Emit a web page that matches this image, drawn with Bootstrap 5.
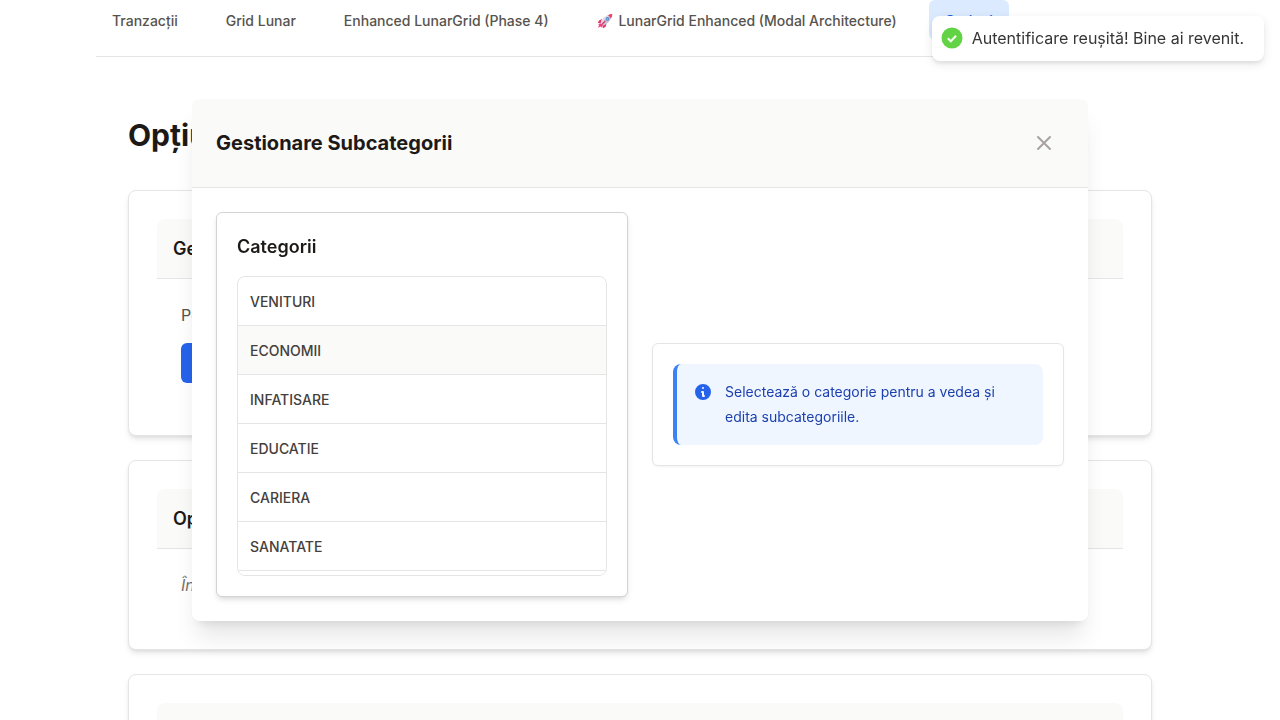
<!DOCTYPE html>
<html lang="ro">
<head>
<meta charset="utf-8">
<meta name="viewport" content="width=device-width, initial-scale=1">
<title>Opțiuni</title>
<link href="https://cdn.jsdelivr.net/npm/bootstrap@5.3.0/dist/css/bootstrap.min.css" rel="stylesheet">
<style>
  :root {
    --line: #e5e5e5;
    --soft: #fafaf9;
    --ink: #1c1917;
    --text: #57534e;
    --shadow-md: 0 4px 6px -1px rgba(0,0,0,.1), 0 2px 4px -2px rgba(0,0,0,.1);
  }
  body { font-family: Inter, "Liberation Sans", sans-serif; color: var(--ink); background: #fff; }
  h1, h2, h3, p { margin: 0; }
  .page { max-width: 1152px; padding: 0 32px; }
  .tabs { border-bottom: 1px solid var(--line); padding-bottom: 16px; margin-bottom: 24px; }
  .tabs .nav-link { color: var(--text); font-size: 14px; line-height: 20px; padding-top: 11px; padding-bottom: 9px; font-weight: 500; border-radius: 6px; white-space: nowrap; }
  .tabs .nav-link.active { background: #dbeafe; color: #2563eb; }
  .rocket { vertical-align: -3px; }
  .page-title { font-size: 30px; line-height: 45px; font-weight: 700; margin-bottom: 32px; }
  .panel { border: 1px solid var(--line); border-radius: 8px; padding: 28px; box-shadow: var(--shadow-md); background: #fff; }
  .panel-head { background: var(--soft); border-bottom: 1px solid var(--line); border-radius: 8px 8px 0 0; }
  .panel-head h2, .pane h3 { font-size: 18px; line-height: 27px; font-weight: 600; }
  .panel p { color: var(--text); }
  .panel p.fst-italic { color: #78716c; }
  .btn-main { background: #2563eb; color: #fff; border-radius: 6px; font-size: 14px; font-weight: 500; height: 40px; border: 0; }
  .modal { --bs-modal-width: 896px; }
  .modal-content { border: 0; border-radius: 8px; color: var(--ink); box-shadow: 0 20px 25px -5px rgba(0,0,0,.1), 0 8px 10px -6px rgba(0,0,0,.1); }
  .modal-header { background: var(--soft); border-bottom: 1px solid var(--line); border-radius: 8px 8px 0 0; padding: 24px; }
  .modal-title { font-size: 20px; line-height: 30px; font-weight: 700; }
  .close-x { width: 40px; height: 40px; color: #a8a29e; }
  .pane { border: 1px solid var(--line); border-radius: 6px; padding: 20px; box-shadow: 0 1px 2px rgba(0,0,0,.05); background: #fff; }
  .pane-strong { border-color: #d6d3d1; box-shadow: var(--shadow-md); }
  .cat-list { border: 1px solid var(--line); border-radius: 8px; max-height: 300px; overflow-y: auto; scrollbar-width: none; }
  .cat-list::-webkit-scrollbar { display: none; }
  .cat-list .list-group-item { flex-shrink: 0; padding: 13px 12px 11px; font-size: 14px; line-height: 24px; font-weight: 500; color: #44403c; border-color: var(--line); border-width: 0 0 1px; }
  .cat-list .list-group-item.hovered { background: var(--soft); }
  .note { background: #eff6ff; color: #1e40af; border-left: 4px solid #3b82f6; border-radius: 8px; padding: 15px 16px 16px; font-size: 14px; line-height: 25px; gap: 12px; }
  .note svg { color: #2563eb; margin-top: 3px; }
  .notice { top: 16px; right: 16px; z-index: 1100; background: #fff; color: #363636; border-radius: 8px; padding: 12px 20px 12px 10px; gap: 10px; line-height: 21px; box-shadow: 0 3px 10px rgba(0,0,0,.1), 0 3px 3px rgba(0,0,0,.05); }
</style>
</head>
<body class="overflow-hidden">
<div class="page mx-auto">
  <nav class="nav tabs flex-nowrap gap-3" aria-label="Principal">
    <a class="nav-link" href="#">Tranzacții</a>
    <a class="nav-link" href="#">Grid Lunar</a>
    <a class="nav-link" href="#">Enhanced LunarGrid (Phase 4)</a>
    <a class="nav-link" href="#"><svg class="rocket" width="18" height="16" viewBox="0 0 18 16" aria-hidden="true">
      <path d="M5 6L2 7.500.8 10l3 .2zM9.500 10.500L8.500 14l-2.700 1.300L5.600 12z" fill="#e8316f"/>
      <path d="M3.600 10L1.200 11.600l1 .5-1.400 2.700 2.800-1.200.8 1 1.700-2.300z" fill="#f0437f"/>
      <path d="M3.500 10.500Q5.500 3.500 13.500 1.300L15 2.800Q13 10 6 12.800z" fill="#c5bfd0"/>
      <path d="M3.500 10.500Q5.500 3.500 13.500 1.300L14 1.800Q7.500 6 4.600 11.500z" fill="#e0dce6"/>
      <path d="M11 2.300Q13 1.100 15.300 1 15.400 3.100 14 5.500 12.800 3.500 11 2.300z" fill="#ea3f64"/>
      <circle cx="10.400" cy="5.900" r="1.800" fill="#5b7fc7"/><circle cx="10.400" cy="5.900" r="1" fill="#5cc4f5"/>
      <path d="M4.800 11.500L8 8.200" stroke="#d93268" stroke-width="1.200" stroke-linecap="round"/>
    </svg> LunarGrid Enhanced (Modal Architecture)</a>
    <a class="nav-link active" href="#">Opțiuni</a>
  </nav>
  <main class="mx-3 pb-4">
    <div class="px-3 pt-3 mt-3">
      <h1 class="page-title pt-3">Opțiuni</h1>
      <div class="d-flex flex-column gap-4">
        <section class="panel">
          <div class="panel-head p-3"><h2>Gestionare</h2></div>
          <div class="p-4">
            <p class="mb-3">Personalizează</p>
            <button type="button" class="btn btn-main px-3 d-block">Gestionează</button>
          </div>
        </section>
        <section class="panel">
          <div class="panel-head p-3"><h2>Opțiuni</h2></div>
          <div class="p-4"><p class="fst-italic">În curând</p></div>
        </section>
        <section class="panel">
          <div class="panel-head p-3"><h2>Export</h2></div>
        </section>
      </div>
    </div>
  </main>
</div>

<div class="modal d-block" role="dialog" aria-modal="true" aria-labelledby="dlg-title">
  <div class="modal-dialog modal-dialog-centered">
    <div class="modal-content">
      <div class="modal-header">
        <h2 class="modal-title" id="dlg-title">Gestionare Subcategorii</h2>
        <button type="button" class="btn close-x border-0 p-0 d-flex align-items-center justify-content-center" aria-label="Închide">
          <svg width="24" height="24" viewBox="0 0 24 24" fill="none" stroke="currentColor" stroke-width="2" stroke-linecap="round" stroke-linejoin="round"><path d="M6 18L18 6M6 6l12 12"/></svg>
        </button>
      </div>
      <div class="modal-body p-4">
        <div class="row g-4 align-items-center">
          <div class="col-6">
            <div class="pane pane-strong">
              <h3 class="mb-3">Categorii</h3>
              <div class="list-group cat-list">
                <button type="button" class="list-group-item list-group-item-action">VENITURI</button>
                <button type="button" class="list-group-item list-group-item-action hovered">ECONOMII</button>
                <button type="button" class="list-group-item list-group-item-action">INFATISARE</button>
                <button type="button" class="list-group-item list-group-item-action">EDUCATIE</button>
                <button type="button" class="list-group-item list-group-item-action">CARIERA</button>
                <button type="button" class="list-group-item list-group-item-action">SANATATE</button>
                <button type="button" class="list-group-item list-group-item-action">NUTRITIE</button>
              </div>
            </div>
          </div>
          <div class="col-6">
            <div class="pane">
              <div class="note d-flex align-items-start" role="note">
                <svg class="flex-shrink-0" width="20" height="20" viewBox="0 0 20 20" fill="currentColor" aria-hidden="true"><path fill-rule="evenodd" clip-rule="evenodd" d="M18 10a8 8 0 11-16 0 8 8 0 0116 0zm-7-4a1 1 0 11-2 0 1 1 0 012 0zM9 9a1 1 0 000 2v3a1 1 0 001 1h1a1 1 0 100-2v-3a1 1 0 00-1-1H9z"/></svg>
                <p>Selectează o categorie pentru a vedea și edita subcategoriile.</p>
              </div>
            </div>
          </div>
        </div>
      </div>
    </div>
  </div>
</div>

<div class="notice position-fixed d-flex align-items-start" role="status">
  <svg width="20" height="20" viewBox="0 0 20 20" overflow="visible" aria-hidden="true"><circle cx="10" cy="10" r="10.5" fill="#61d345"/><path d="M5.800 10.200l3 3 5.300-5.500" fill="none" stroke="#fff" stroke-opacity=".9" stroke-width="2.200"/></svg>
  <span>Autentificare reușită! Bine ai revenit.</span>
</div>
<script src="https://cdn.jsdelivr.net/npm/bootstrap@5.3.0/dist/js/bootstrap.bundle.min.js"></script>
</body>
</html>
